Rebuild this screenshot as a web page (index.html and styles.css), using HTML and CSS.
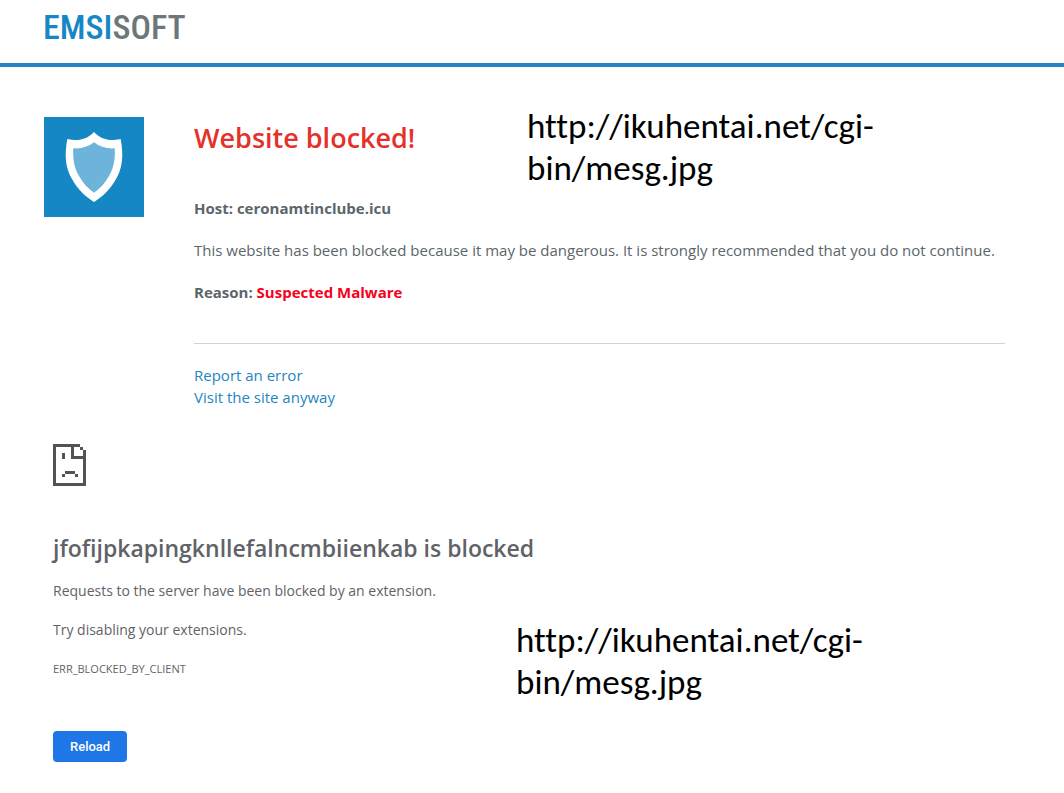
FILE: index.html
```
<!DOCTYPE html>
<html lang="en">
<head>
    <meta charset="UTF-8">
    <meta name="viewport" content="width=device-width, initial-scale=1.0">
    <title>Website blocked</title>
    <link rel="stylesheet" href="styles.css">
</head>
<body>

    <header class="header">
        <div class="logo"><span class="logo-blue">EMSI</span>SOFT</div>
    </header>

    <main>
        <section class="warning">
            <svg class="shield" viewBox="0 0 100 100" aria-hidden="true">
                <rect width="100" height="100" fill="#1687c5"/>
                <path fill="#fff" d="M50 15C44 21.500 35 25 23.300 22C20 40 22 52 28 62C34 73 42 80 50 85C58 80 66 73 72 62C78 52 80 40 76.700 22C65 25 56 21.500 50 15Z"/>
                <path fill="#6cb4d9" d="M50 25.300C56 30 63 32 70.700 31.300C71.500 44 69 52 65 59C61 66 56 71.500 50 75.700C44 71.500 39 66 35 59C31 52 28.500 44 29.300 31.300C37 32 44 30 50 25.300Z"/>
            </svg>
            <div class="warning-body">
                <h1>Website blocked!</h1>
                <p><strong>Host: ceronamtinclube.icu</strong></p>
                <p>This website has been blocked because it may be dangerous. It is strongly recommended that you do not continue.</p>
                <p><strong>Reason: <span class="reason">Suspected Malware</span></strong></p>
                <hr>
                <nav class="links">
                    <a href="#">Report an error</a>
                    <a href="#">Visit the site anyway</a>
                </nav>
            </div>
            <div class="note note-top">http://ikuhentai.net/cgi-<br>bin/mesg.jpg</div>
        </section>

        <section class="error">
            <svg class="sad-page" viewBox="0 0 33 42" shape-rendering="crispEdges" aria-hidden="true">
                <path fill="#535353" fill-rule="evenodd" d="M0 0H27V3H30V6H33V42H0ZM3 3V39H30V15H18V3ZM21 3V12H30V6H27V3ZM9 9H12V15H9ZM12 27H22V30H12ZM9 30H12V33H9ZM22 30H25V33H22Z"/>
            </svg>
            <h2>jfofijpkapingknllefalncmbiienkab is blocked</h2>
            <p>Requests to the server have been blocked by an extension.</p>
            <p>Try disabling your extensions.</p>
            <p class="error-code">ERR_BLOCKED_BY_CLIENT</p>
            <button type="button" class="reload">Reload</button>
            <div class="note note-bottom">http://ikuhentai.net/cgi-<br>bin/mesg.jpg</div>
        </section>
    </main>

</body>
</html>
```
FILE: styles.css
```
* {
    box-sizing: border-box;
}

body {
    margin: 0;
    background: #fff;
    color: #5b666b;
    font-family: 'Segoe UI', 'Open Sans', 'Noto Sans', sans-serif;
    font-size: 15px;
    line-height: 22px;
}

h1, h2, p {
    margin: 0;
}

.header {
    padding: 6px 43px 15px;
    border-bottom: 4px solid #2585c3;
}

.logo {
    color: #6b7779;
    font-family: 'Roboto Condensed', 'Liberation Sans Narrow', sans-serif;
    font-size: 34px;
    font-weight: 500;
    line-height: 42px;
}

.logo-blue {
    color: #1687c5;
}

/* Emsisoft warning */
.warning {
    position: relative;
    display: flex;
    gap: 50px;
    padding: 50px 59px 0 44px;
}

.shield {
    flex: none;
    width: 100px;
    height: 100px;
}

.warning-body {
    flex: 1;
}

.warning-body h1 {
    margin-bottom: 38px;
    color: #e5312b;
    font-size: 27px;
    font-weight: 600;
    line-height: 42px;
}

.warning-body p {
    margin-bottom: 20px;
}

.reason {
    color: #f8001c;
}

hr {
    margin: 40px 0 20px;
    border: 0;
    border-top: 1px solid #cfd4d4;
}

.links {
    display: flex;
    flex-direction: column;
    align-items: flex-start;
}

.links a {
    color: #2585c3;
    text-decoration: none;
}

.links a:hover {
    text-decoration: underline;
}

/* Browser error page */
.error {
    position: relative;
    padding: 36px 53px 32px;
    color: #5f6368;
    font-size: 14px;
}

.sad-page {
    display: block;
    width: 33px;
    height: 42px;
}

.error h2 {
    margin: 46px 0 16px;
    font-size: 23px;
    font-weight: 600;
    line-height: 32px;
}

.error p {
    margin-bottom: 17px;
}

.error .error-code {
    margin-bottom: 51px;
    font-size: 11px;
}

.reload {
    display: block;
    padding: 0 17px;
    border: 0;
    border-radius: 4px;
    background: #1f76e6;
    color: #fff;
    font-family: Roboto, sans-serif;
    font-size: 13px;
    font-weight: 500;
    line-height: 31px;
    cursor: pointer;
}

/* Notes pinned over the page */
.note {
    position: absolute;
    color: #000;
    font-family: Calibri, Carlito, 'Open Sans', sans-serif;
    font-size: 35px;
    font-variant-ligatures: none;
    line-height: 42px;
}

.note-top {
    top: 38px;
    left: 527px;
}

.note-bottom {
    top: 211px;
    left: 516px;
}
```
